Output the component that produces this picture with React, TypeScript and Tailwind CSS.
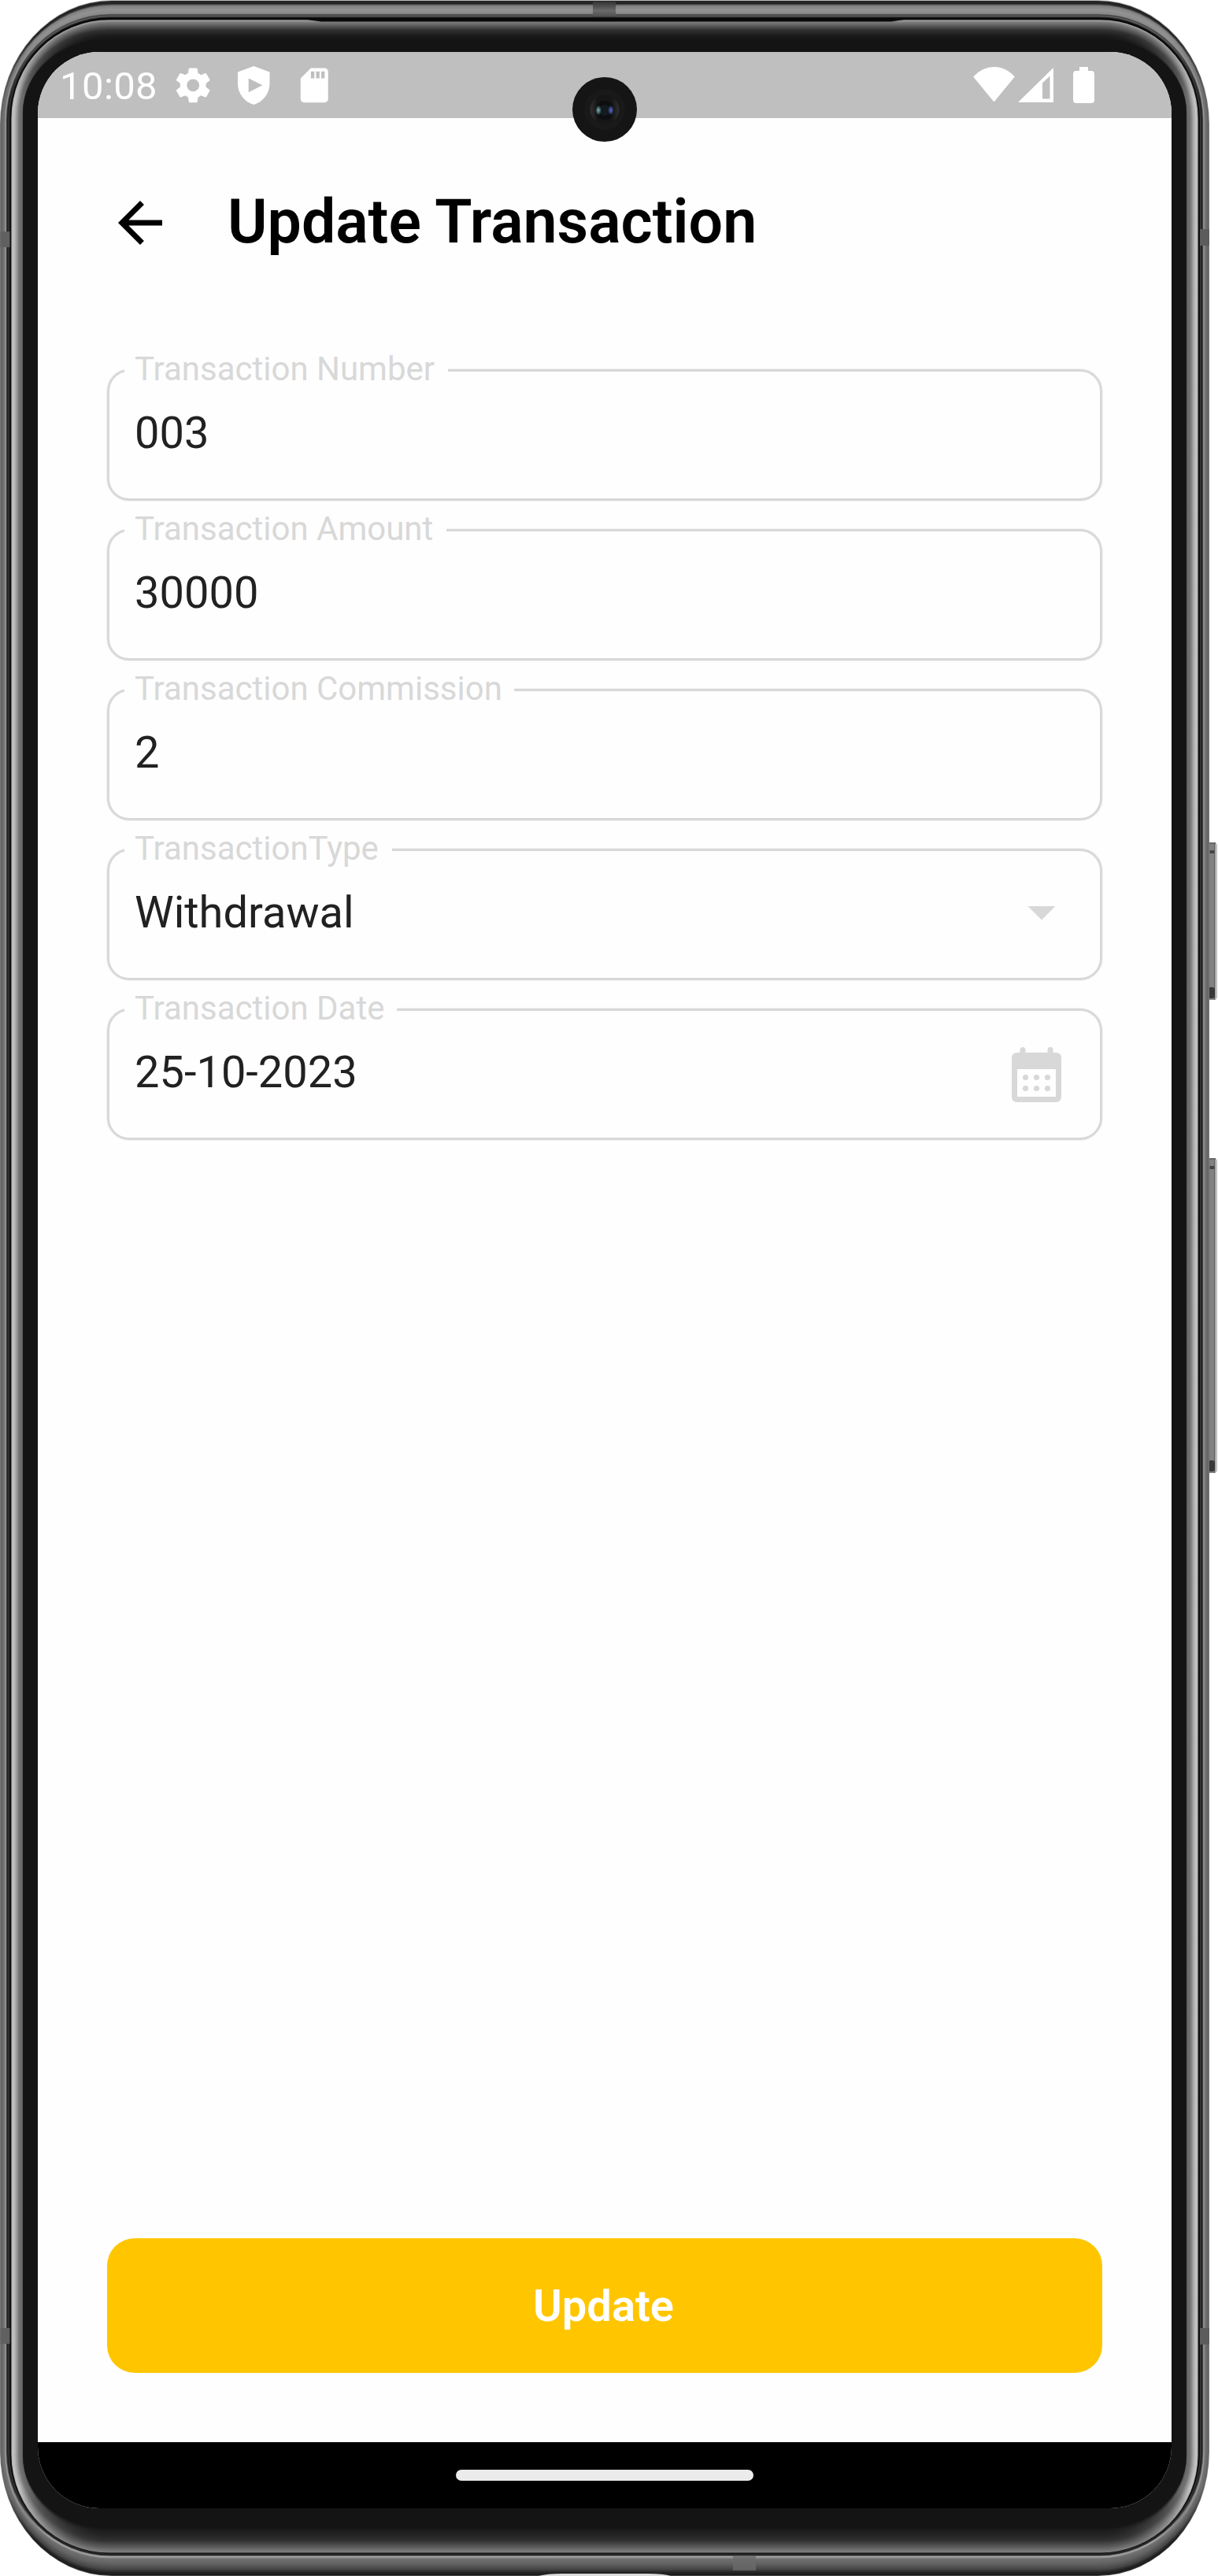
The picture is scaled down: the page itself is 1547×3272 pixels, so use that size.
import React from "react";

type Key = { s: number; t: number; b: number; side: number; top: number; bottom: number };

// Cross-section of the metal case, from the outer edge towards the glass.
const PROFILE: Key[] = [
  { s: 0, t: 0, b: 0, side: 130, top: 190, bottom: 70 },
  { s: 0.6, t: 1, b: 1, side: 104, top: 38, bottom: 26 },
  { s: 1.6, t: 4, b: 4, side: 100, top: 36, bottom: 36 },
  { s: 3, t: 7, b: 8, side: 108, top: 130, bottom: 70 },
  { s: 5.5, t: 12, b: 15, side: 116, top: 146, bottom: 98 },
  { s: 7, t: 17, b: 21, side: 160, top: 136, bottom: 112 },
  { s: 8, t: 18.5, b: 24, side: 70, top: 60, bottom: 178 },
  { s: 9.5, t: 20, b: 25.5, side: 24, top: 100, bottom: 90 },
  { s: 11, t: 21.5, b: 26.5, side: 60, top: 40, bottom: 20 },
  { s: 12, t: 22.5, b: 27.3, side: 14, top: 8, bottom: 50 },
  { s: 13.6, t: 24.5, b: 28.6, side: 14, top: 8, bottom: 12 },
  { s: 14.4, t: 25.2, b: 29.4, side: 180, top: 160, bottom: 122 },
  { s: 16.5, t: 28, b: 31, side: 196, top: 122, bottom: 120 },
  { s: 20, t: 32, b: 36, side: 165, top: 92, bottom: 92 },
  { s: 24, t: 38, b: 44, side: 115, top: 48, bottom: 50 },
  { s: 28.6, t: 46, b: 53, side: 100, top: 24, bottom: 24 },
  { s: 29.2, t: 50, b: 60, side: 20, top: 20, bottom: 20 },
];

const mix = (a: number, b: number, f: number) => a + (b - a) * f;

const LAYERS: Key[] = PROFILE.flatMap((k, i) => {
  const n = PROFILE[i + 1];
  if (!n) return [k];
  const steps = Math.max(1, Math.round(Math.max(n.s - k.s, n.t - k.t)));
  return Array.from({ length: steps }, (_, j) => {
    const f = j / steps;
    return {
      s: mix(k.s, n.s, f),
      t: mix(k.t, n.t, f),
      b: mix(k.b, n.b, f),
      side: mix(k.side, n.side, f),
      top: mix(k.top, n.top, f),
      bottom: mix(k.bottom, n.bottom, f),
    };
  });
});

const grey = (v: number) => `rgb(${Math.round(v)},${Math.round(v)},${Math.round(v)})`;

function PhoneCase() {
  return (
    <svg className="absolute left-0 top-0" width="1547" height="3272" viewBox="0 0 1547 3272">
      <defs>
        {LAYERS.map((l, i) => (
          <linearGradient key={i} id={`case${i}`} gradientUnits="userSpaceOnUse" x1="0" y1="0" x2="0" y2="3272">
            <stop offset="0.014" stopColor={grey(l.top)} />
            <stop offset="0.038" stopColor={grey(l.side)} />
            <stop offset="0.966" stopColor={grey(l.side)} />
            <stop offset="0.986" stopColor={grey(l.bottom)} />
          </linearGradient>
        ))}
        <linearGradient id="key" x1="0" y1="0" x2="1" y2="0">
          <stop offset="0" stopColor="#4a4a4a" />
          <stop offset="0.3" stopColor="#7c7c7c" />
          <stop offset="0.7" stopColor="#848484" />
          <stop offset="0.8" stopColor="#606060" />
          <stop offset="0.9" stopColor="#d2d2d2" />
          <stop offset="1" stopColor="#a8a8a8" />
        </linearGradient>
        <linearGradient id="seam" x1="0" y1="0" x2="0" y2="1">
          <stop offset="0" stopColor="#333" />
          <stop offset="0.6" stopColor="#6a6a6a" />
          <stop offset="1" stopColor="#505050" />
        </linearGradient>
      </defs>
      {[
        [1070, 200],
        [1471, 400],
      ].map(([y, h]) => (
        <g key={y}>
          <rect x="1530" y={y} width="16" height={h} rx="4" fill="url(#key)" />
          <rect x="1534" y={y} width="10" height="2" fill="#6a6a6a" />
          <rect x="1536.5" y={y + 10} width="6" height="4" rx="1" fill="#444" />
          <rect x="1534" y={y + h - 16} width="9" height="14" rx="3" fill="#383838" />
        </g>
      ))}
      {LAYERS.map((l, i) => {
        const r = Math.max(l.s, l.t);
        return (
          <rect
            key={i}
            x={l.s}
            y={l.t}
            width={1536 - l.s * 2}
            height={3272 - l.t - l.b}
            rx={142 - l.s * 1.2}
            ry={158 - r * 1.3}
            fill={`url(#case${i})`}
          />
        );
      })}
      <path d="M390 25h758l-16 2.5H408z" fill="#0a0a0a" />
      <rect x="753" y="2" width="29" height="19" fill="url(#seam)" />
      <rect x="931" y="3246" width="29" height="19" fill="#6a6a6a" opacity="0.8" />
      <rect x="0.5" y="294" width="12" height="20" fill="#606060" />
      <rect x="1524" y="291" width="12" height="21" fill="#5c5c5c" />
      <rect x="0.5" y="2957" width="12" height="20" fill="#606060" />
      <rect x="1524" y="2957" width="12" height="21" fill="#5c5c5c" />
      <path d="M684 3272q10-3 30-3h108q22 0 30 3z" fill="#dcdcdc" />
    </svg>
  );
}

function StatusBar() {
  return (
    <div className="flex h-[84px] shrink-0 items-start bg-[#bfbfbf] pt-4 text-white">
      <span className="ml-7 mt-[2px] w-[143px] text-[49px] leading-[52px] tracking-[0.4px]">10:08</span>
      <div className="flex gap-[24.5px]">
        <svg className="size-[52.5px]" viewBox="0 0 24 24" fill="currentColor">
          <path d="M19.43 12.98c.04-.32.07-.64.07-.98s-.03-.66-.07-.98l2.11-1.65c.19-.15.24-.42.12-.64l-2-3.46c-.12-.22-.39-.3-.61-.22l-2.49 1c-.52-.4-1.08-.73-1.69-.98l-.38-2.65C14.46 2.18 14.25 2 14 2h-4c-.25 0-.46.18-.49.42l-.38 2.65c-.61.25-1.17.59-1.69.98l-2.49-1c-.23-.09-.49 0-.61.22l-2 3.46c-.13.22-.07.49.12.64l2.11 1.65c-.04.32-.07.65-.07.98s.03.66.07.98l-2.11 1.65c-.19.15-.24.42-.12.64l2 3.46c.12.22.39.3.61.22l2.49-1c.52.4 1.08.73 1.69.98l.38 2.65c.03.24.24.42.49.42h4c.25 0 .46-.18.49-.42l.38-2.65c.61-.25 1.17-.59 1.69-.98l2.49 1c.23.09.49 0 .61-.22l2-3.46c.12-.22.07-.49-.12-.64l-2.11-1.65zM12 15.6c-1.98 0-3.6-1.62-3.6-3.6s1.62-3.6 3.6-3.6 3.6 1.62 3.6 3.6-1.62 3.6-3.6 3.6z" />
        </svg>
        <svg className="size-[52.5px]" viewBox="0 0 52.5 52.5" fill="currentColor" fillRule="evenodd">
          <path d="M26.3 2 6 9.5V24c0 13 8.500 23.500 20.300 27C38 47.500 46.500 37 46.500 24V9.500zM19.700 17.500 37.500 26.300 19.700 35.200z" />
        </svg>
        <svg className="size-[52.5px]" viewBox="0 0 24 24" fill="currentColor">
          <path d="M18 2h-8L4.020 8 4 20c0 1.100.9 2 2 2h12c1.100 0 2-.9 2-2V4c0-1.100-.9-2-2-2zm-6 6h-2V4h2v4zm3 0h-2V4h2v4zm3 0h-2V4h2v4z" />
        </svg>
      </div>
      <svg className="ml-auto mr-[97px]" width="156" height="52" viewBox="0 0 156 52" fill="currentColor">
        <path d="M1.200 15.500Q12.500 3 27.500 3t26.300 12.500L27.500 47.500z" />
        <path fillRule="evenodd" d="M58 48 103 4v44zM89 23.500V43.500h9.500V14.500z" />
        <path d="M139 3v5h-4q-4 0-4 4v33q0 4 4 4h19q4 0 4-4V12q0-4-4-4h-4V3z" transform="translate(-3)" />
      </svg>
    </div>
  );
}

function Field({ label, value, notch, icon }: { label: string; value: string; notch: string; icon?: React.ReactNode }) {
  return (
    <div className="relative flex h-[167px] shrink-0 items-center rounded-[28px] border-[3px] border-[#d8d8d8] px-[32px] shadow-[0_0_0_1px_#d8d8d850]">
      <span
        className={`absolute -top-[31px] left-[19px] h-[56px] whitespace-nowrap bg-[#fefefe] pl-[13px] text-[42px] leading-[56px] text-[#d8d8d8] ${notch}`}
      >
        {label}
      </span>
      <span className="-mt-[5px] grow text-[56px] leading-[66px] text-[#212121]">{value}</span>
      {icon}
    </div>
  );
}

const caret = (
  <svg className="-mt-[7px]" width="84" height="84" viewBox="0 0 24 24" fill="#d8d8d8">
    <path d="M7 10l5 5 5-5z" />
  </svg>
);

const calendar = (
  <svg className="mr-[17px] mt-px" width="63" height="70" viewBox="0 0 63 70" fill="#d8d8d8">
    <rect x="10.500" y="0" width="7" height="12" rx="3.500" />
    <rect x="45.500" y="0" width="7" height="12" rx="3.500" />
    <path fillRule="evenodd" d="M7 7h49q7 0 7 7v49q0 7-7 7H7q-7 0-7-7V14q0-7 7-7zM7 28v35h49V28z" />
    {[17.5, 31.5, 45.5].map((x) => (
      <g key={x}>
        <circle cx={x} cy="38.500" r="3.600" />
        <circle cx={x} cy="52.500" r="3.600" />
      </g>
    ))}
  </svg>
);

function Camera() {
  return (
    <svg className="absolute left-[727px] top-[98px]" width="82" height="82" viewBox="0 0 82 82">
      <defs>
        <radialGradient id="lensL">
          <stop offset="0" stopColor="#7fb9b9" />
          <stop offset="1" stopColor="#7fb9b9" stopOpacity="0" />
        </radialGradient>
        <radialGradient id="lensR">
          <stop offset="0" stopColor="#5d70dc" />
          <stop offset="1" stopColor="#5d70dc" stopOpacity="0" />
        </radialGradient>
        <linearGradient id="lensRing">
          <stop offset="0" stopColor="#303030" />
          <stop offset="0.25" stopColor="#161616" />
          <stop offset="0.75" stopColor="#161616" />
          <stop offset="1" stopColor="#303030" />
        </linearGradient>
      </defs>
      <circle cx="41" cy="41" r="41" fill="#151515" />
      <circle cx="41" cy="41" r="26" fill="#191919" />
      <circle cx="41" cy="41" r="18.500" fill="url(#lensRing)" />
      <circle cx="41" cy="42" r="12" fill="#0d0e10" />
      <circle cx="41" cy="42" r="7" fill="#131a20" />
      <ellipse cx="33" cy="42" rx="4" ry="6.500" fill="url(#lensL)" />
      <ellipse cx="49" cy="42" rx="4" ry="6.500" fill="url(#lensR)" />
    </svg>
  );
}

export default function App() {
  return (
    <div className="relative h-[3272px] w-[1547px] overflow-hidden bg-white pl-12 pt-[66px] font-[Roboto,sans-serif]">
      <PhoneCase />
      <div className="relative flex h-[3120px] w-[1440px] flex-col overflow-hidden rounded-[78px] bg-[#fefefe]">
        <StatusBar />
        <header className="flex h-[319px] shrink-0 items-start px-[88px] pt-[91px]">
          <svg className="size-[84px]" viewBox="0 0 24 24" fill="#000">
            <path d="M20 11H7.830l5.590-5.590L12 4l-8 8 8 8 1.410-1.410L7.830 13H20v-2z" />
          </svg>
          <h1 className="-mt-px ml-[69px] text-[77px] font-semibold leading-[84px] text-black">Update Transaction</h1>
        </header>
        <main className="flex grow flex-col gap-9 px-[88px]">
          <Field label="Transaction Number" value="003" notch="w-[411px]" />
          <Field label="Transaction Amount" value="30000" notch="w-[409px]" />
          <Field label="Transaction Commission" value="2" notch="w-[495px]" />
          <Field label="TransactionType" value="Withdrawal" notch="w-[340px]" icon={caret} />
          <Field label="Transaction Date" value="25-10-2023" notch="w-[346px]" icon={calendar} />
          <button className="mb-[88px] mt-auto h-[171px] rounded-[35px] bg-[#ffc600] pr-[3px] text-[56px] font-semibold leading-[66px] text-white">
            Update
          </button>
        </main>
        <div className="flex h-[84px] shrink-0 items-center justify-center bg-black">
          <div className="h-[14px] w-[378px] rounded-full bg-[#ebebeb]" />
        </div>
      </div>
      <Camera />
    </div>
  );
}
